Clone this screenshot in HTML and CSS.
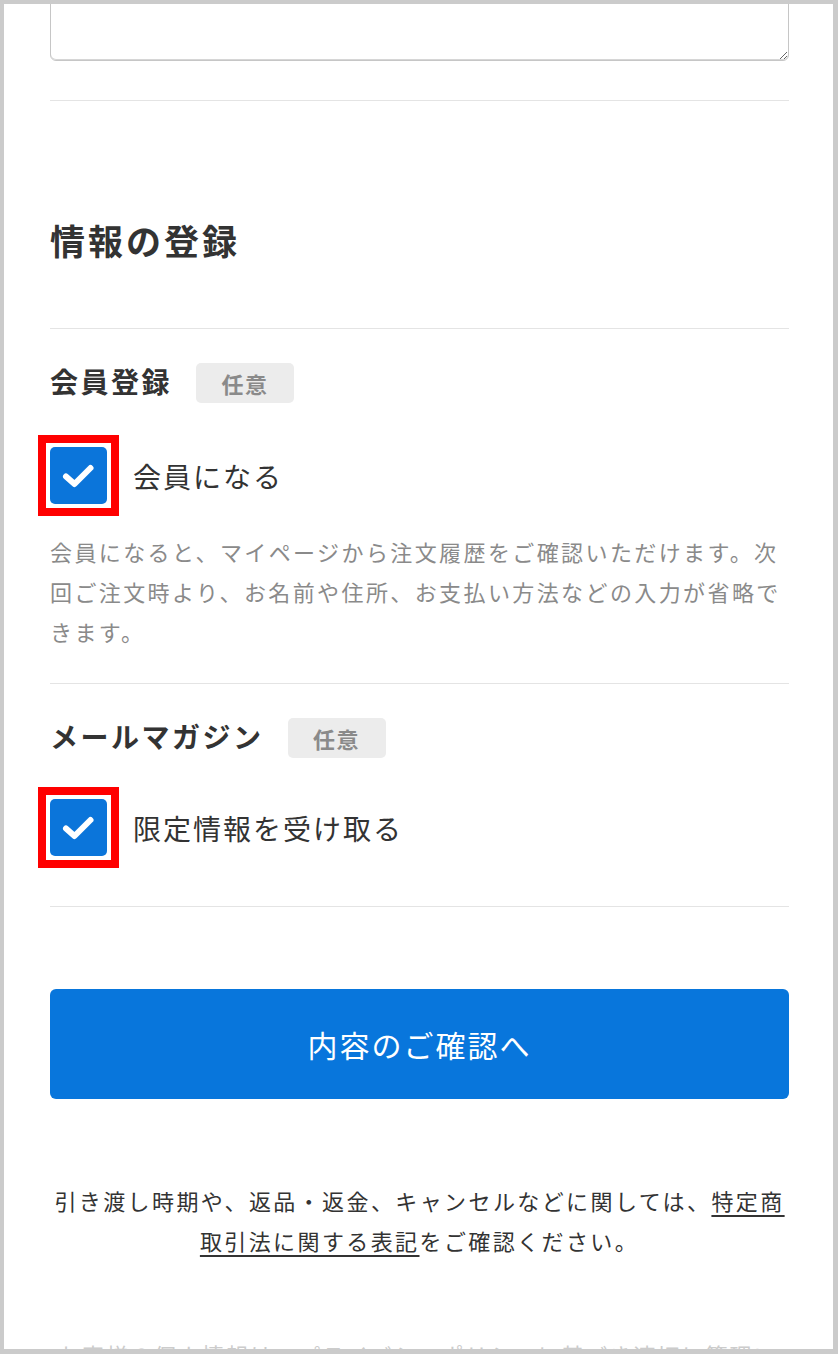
FILE: index.html
```html
<!DOCTYPE html>
<html lang="ja">
<head>
<meta charset="utf-8">
<title>情報の登録</title>
<link rel="stylesheet" href="styles.css">
</head>
<body>
<div class="frame">
  <div class="content">
    <textarea class="memo" aria-label="備考"></textarea>
    <hr class="divider divider-top">

    <h2 class="section-title">情報の登録</h2>
    <hr class="divider divider-after-title">

    <div class="field">
      <div class="field-head">
        <span class="field-title">会員登録</span>
        <span class="badge">任意</span>
      </div>
      <label class="check-row">
        <span class="check-mark"><span class="check-box"><svg viewBox="0 0 57 57" width="57" height="57"><path d="M16 29.5 L24.5 37 L40.5 21" fill="none" stroke="#fff" stroke-width="6" stroke-linecap="round" stroke-linejoin="round"/></svg></span></span>
        <span class="check-label">会員になる</span>
      </label>
      <p class="note">会員になると、マイページから注文履歴をご確認いただけます。次回ご注文時より、お名前や住所、お支払い方法などの入力が省略できます。</p>
    </div>
    <hr class="divider divider-mid">

    <div class="field">
      <div class="field-head">
        <span class="field-title">メールマガジン</span>
        <span class="badge">任意</span>
      </div>
      <label class="check-row check-row-last">
        <span class="check-mark"><span class="check-box"><svg viewBox="0 0 57 57" width="57" height="57"><path d="M16 29.5 L24.5 37 L40.5 21" fill="none" stroke="#fff" stroke-width="6" stroke-linecap="round" stroke-linejoin="round"/></svg></span></span>
        <span class="check-label">限定情報を受け取る</span>
      </label>
    </div>
    <hr class="divider divider-bottom">

    <button class="submit" type="button">内容のご確認へ</button>

    <p class="legal">引き渡し時期や、返品・返金、キャンセルなどに関しては、<a href="#" class="legal-link">特定商取引法に関する表記</a>をご確認ください。</p>

    <p class="faint">お客様の個人情報は、プライバシーポリシーに基づき適切に管理いたします。</p>
  </div>
</div>
</body>
</html>
```

FILE: styles.css
```css
html, body {
  margin: 0;
  padding: 0;
  background: #ffffff;
}

body {
  font-family: "Noto Sans CJK JP", "Noto Sans", sans-serif;
  color: #333333;
}

.frame {
  box-sizing: border-box;
  width: 838px;
  height: 1354px;
  border-style: solid;
  border-color: #cbcbcb;
  border-width: 4px 5px 5px 4px;
  overflow: hidden;
  background: #ffffff;
}

.content {
  padding: 0 44px 0 46px;
}

.memo {
  display: block;
  box-sizing: border-box;
  width: 100%;
  height: 97px;
  margin: -40px 0 0 0;
  border: 1px solid #c6c6c6;
  border-radius: 6px;
  box-shadow: inset 0 -1px 0 #d6d6d6;
  background: #ffffff;
  resize: vertical;
}

.divider {
  border: 0;
  height: 1px;
  background: #e4e4e4;
  margin: 0;
}

.divider-top {
  margin-top: 39px;
}

.section-title {
  margin: 115px 0 0 0;
  font-size: 35px;
  line-height: 48px;
  font-weight: 700;
  letter-spacing: 3px;
  color: #333333;
}

.divider-after-title {
  margin-top: 64px;
}

.field {
  padding-top: 34px;
}

.field-head {
  display: flex;
  align-items: center;
  gap: 24px;
  height: 40px;
}

.field-title {
  font-size: 28px;
  line-height: 40px;
  font-weight: 700;
  letter-spacing: 2.5px;
  color: #333333;
  position: relative;
  top: -2px;
}

.badge {
  display: inline-flex;
  align-items: center;
  justify-content: center;
  width: 98px;
  height: 40px;
  border-radius: 5px;
  background: #ececec;
  color: #8a8a8a;
  font-size: 22px;
  font-weight: 700;
  letter-spacing: 1.5px;
}

.check-row {
  display: flex;
  align-items: center;
  gap: 26px;
  margin-top: 44px;
  cursor: pointer;
}

.check-row-last {
  margin-top: 41px;
}

.check-mark {
  display: block;
  flex: none;
  margin: -12px;
  padding: 4px;
  border: 8px solid #ff0000;
  background: #ffffff;
}

.check-box {
  display: block;
  width: 57px;
  height: 57px;
  border-radius: 5px;
  background: #0b75da;
}

.check-box svg {
  display: block;
}

.check-label {
  font-size: 28px;
  line-height: 40px;
  letter-spacing: 2px;
  color: #333333;
}

.note {
  margin: 27px 0 0 0;
  font-size: 22px;
  line-height: 40px;
  letter-spacing: 2.4px;
  color: #8a8a8a;
}

.divider-mid {
  margin-top: 32px;
}

.divider-bottom {
  margin-top: 50px;
}

.submit {
  display: block;
  width: 100%;
  height: 110px;
  margin-top: 82px;
  border: 0;
  border-radius: 6px;
  background: #0876dc;
  color: #ffffff;
  font-family: "Noto Sans CJK JP", "Noto Sans", sans-serif;
  font-size: 30px;
  letter-spacing: 2px;
  cursor: pointer;
}

.legal {
  margin: 81px 0 0 0;
  text-align: center;
  font-size: 22px;
  line-height: 40px;
  letter-spacing: 2.4px;
  color: #333333;
}

.legal-link {
  color: #333333;
  text-decoration: underline;
  text-underline-offset: 5px;
}

.faint {
  margin: 74px 0 0 8px;
  font-size: 22px;
  line-height: 40px;
  letter-spacing: 2px;
  color: #cccccc;
}
```
